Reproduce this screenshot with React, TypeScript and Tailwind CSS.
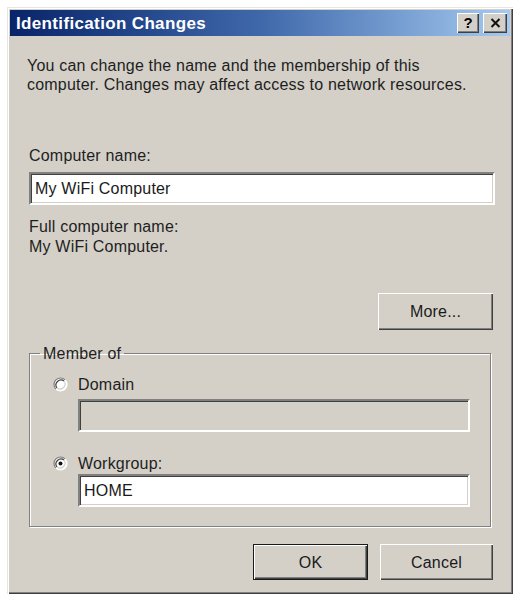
import React from 'react'

const font = { fontFamily: '"Liberation Sans", Arial, sans-serif' }

function Radio({ checked }: { checked?: boolean }) {
  return (
    <svg width="15" height="15" viewBox="0 0 15 15" className="shrink-0">
      <circle cx="7.5" cy="7.5" r="6.5" fill="#ffffff" />
      <path d="M2.9 12.1 A6.5 6.5 0 0 1 12.1 2.9" fill="none" stroke="#808080" strokeWidth="1.2" />
      <path d="M12.1 2.9 A6.5 6.5 0 0 1 2.9 12.1" fill="none" stroke="#ffffff" strokeWidth="1.2" />
      <path d="M4 11 A5 5 0 0 1 11 4" fill="none" stroke="#404040" strokeWidth="1.2" />
      <path d="M11 4 A5 5 0 0 1 4 11" fill="none" stroke="#d4d0c8" strokeWidth="1.2" />
      {checked && <circle cx="7.5" cy="7.5" r="2" fill="#111111" />}
    </svg>
  )
}

function TextBox({ value, disabled }: { value?: string; disabled?: boolean }) {
  return (
    <div
      className={`h-[33px] flex items-center pl-[4px] border-2 border-t-[#808080] border-l-[#808080] border-b-[#ffffff] border-r-[#ffffff] shadow-[inset_1px_1px_0_#404040,inset_-1px_-1px_0_#d4d0c8] text-[16px] text-[#1a1a1a] ${
        disabled ? 'bg-[#d4d0c8]' : 'bg-white'
      }`}
    >
      {value}
    </div>
  )
}

function Button({ label, isDefault, className = '' }: { label: string; isDefault?: boolean; className?: string }) {
  return (
    <button
      className={`h-[36px] bg-[#d4d0c8] text-[16px] tracking-[0.2px] text-[#1a1a1a] ${
        isDefault
          ? 'border border-[#1a1a1a] shadow-[inset_1px_1px_0_#ffffff,inset_-1px_-1px_0_#404040,inset_-2px_-2px_0_#808080]'
          : 'shadow-[inset_1px_1px_0_#ffffff,inset_-1px_-1px_0_#404040,inset_-2px_-2px_0_#808080]'
      } ${className}`}
      style={font}
    >
      {label}
    </button>
  )
}

export default function App() {
  return (
    <div className="min-h-screen bg-white pl-[7px] pt-[7px]" style={font}>
      <div className="w-[506px] h-[587px] bg-[#d4d0c8] p-[3px] flex flex-col shadow-[inset_1px_1px_0_#e8e6e1,inset_2px_2px_0_#ffffff,inset_-1px_-1px_0_#404040,inset_-2px_-2px_0_#808080]">
        {/* Title bar */}
        <div className="h-[26px] flex items-center justify-between pl-[6px] pr-[3px] bg-gradient-to-r from-[#0a246a] via-[#3f68aa] to-[#a6caf0]">
          <span className="text-white font-bold text-[17px] tracking-[0.35px] leading-none">Identification Changes</span>
          <div className="flex items-center gap-[4px]">
            <div className="w-[22px] h-[20px] bg-[#d4d0c8] flex items-center justify-center font-bold text-[15px] text-black shadow-[inset_1px_1px_0_#ffffff,inset_-1px_-1px_0_#404040,inset_-2px_-2px_0_#808080]">
              ?
            </div>
            <div className="w-[24px] h-[20px] bg-[#d4d0c8] flex items-center justify-center shadow-[inset_1px_1px_0_#ffffff,inset_-1px_-1px_0_#404040,inset_-2px_-2px_0_#808080]">
              <svg width="11" height="10" viewBox="0 0 11 10">
                <path d="M1.5 1 L9.5 9 M9.5 1 L1.5 9" stroke="#111" strokeWidth="2" />
              </svg>
            </div>
          </div>
        </div>

        {/* Body */}
        <div className="flex-1 flex flex-col pl-[19px] pr-[15px] pt-[20px] text-[16px] tracking-[0.2px] leading-[19px] text-[#1e1e1e]">
          <p className="-ml-[2px]">
            You can change the name and the membership of this
            <br />
            computer. Changes may affect access to network resources.
          </p>

          <div className="mt-[52px]">Computer name:</div>
          <div className="mt-[7px]">
            <TextBox value="My WiFi Computer" />
          </div>

          <div className="mt-[12px] leading-[20px]">Full computer name:</div>
          <div className="leading-[20px]">My WiFi Computer.</div>

          <div className="mt-[36px] flex justify-end pr-[2px]">
            <Button label="More..." className="w-[115px] h-[37px]" />
          </div>

          <fieldset className="mt-[14px] mr-[4px] border border-[#808080] shadow-[1px_1px_0_#ffffff,inset_1px_1px_0_#ffffff]">
            <legend className="ml-[10px] px-[3px]">Member of</legend>
            <div className="pl-[23px] pr-[20px] pb-[19px]">
              <div className="mt-[12px] flex items-center gap-[10px]">
                <Radio />
                <span>Domain</span>
              </div>
              <div className="mt-[5px] ml-[25px]">
                <TextBox disabled />
              </div>
              <div className="mt-[22px] flex items-center gap-[10px]">
                <Radio checked />
                <span>Workgroup:</span>
              </div>
              <div className="mt-[1px] ml-[25px]">
                <TextBox value="HOME" />
              </div>
            </div>
          </fieldset>

          <div className="mt-[17px] flex justify-end gap-[12px] pr-[2px]">
            <Button label="OK" isDefault className="w-[115px]" />
            <Button label="Cancel" className="w-[113px]" />
          </div>
        </div>
      </div>
    </div>
  )
}
